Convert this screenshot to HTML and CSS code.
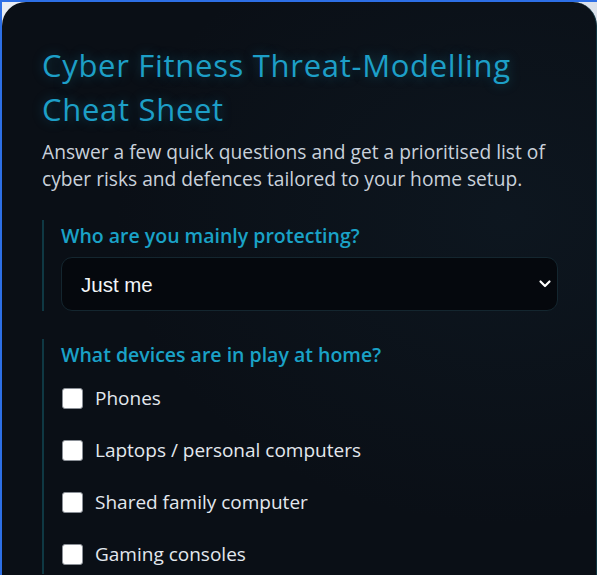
FILE: index.html
```html
<!DOCTYPE html>
<html lang="en">
<head>
<meta charset="utf-8">
<title>Cyber Fitness Threat-Modelling Cheat Sheet</title>
<link rel="stylesheet" href="styles.css">
</head>
<body>
<div class="frame">
  <main class="card">
    <h1 class="title">Cyber Fitness Threat-Modelling Cheat Sheet</h1>
    <p class="intro">Answer a few quick questions and get a prioritised list of cyber risks and defences tailored to your home setup.</p>

    <fieldset class="group">
      <legend class="group-label">Who are you mainly protecting?</legend>
      <div class="select-wrap">
        <select class="select">
          <option>Just me</option>
          <option>Me and my partner</option>
          <option>My family with kids</option>
        </select>
        <svg class="chevron" width="14" height="10" viewBox="0 0 14 10"><path d="M2.5 2.5 L7 7 L11.5 2.5" fill="none" stroke="#ffffff" stroke-width="2.2" stroke-linecap="round" stroke-linejoin="round"/></svg>
      </div>
    </fieldset>

    <fieldset class="group">
      <legend class="group-label">What devices are in play at home?</legend>
      <div class="checks">
        <label class="check"><input type="checkbox" class="box"><span>Phones</span></label>
        <label class="check"><input type="checkbox" class="box"><span>Laptops / personal computers</span></label>
        <label class="check"><input type="checkbox" class="box"><span>Shared family computer</span></label>
        <label class="check"><input type="checkbox" class="box"><span>Gaming consoles</span></label>
      </div>
    </fieldset>
  </main>
</div>
</body>
</html>
```
FILE: styles.css
```css
html, body {
  margin: 0;
  padding: 0;
  height: 100%;
  overflow: hidden;
}
body {
  background: #dfe5ee;
  font-family: "Open Sans", "Noto Sans", sans-serif;
}
.frame {
  height: 100%;
  box-sizing: border-box;
  border-top: 2px solid #2d6fe6;
  border-left: 2px solid #2d6fe6;
  background: linear-gradient(135deg, #e9edf4, #cdd6e3);
}
.card {
  box-sizing: border-box;
  min-height: 100%;
  background:
    radial-gradient(ellipse at 85% 35%, rgba(30, 60, 80, 0.16), transparent 55%),
    #0a0f16;
  border-radius: 24px 24px 0 0;
  border-right: 1px solid #0f3440;
  padding: 41px 38px 40px 40px;
}
.title {
  margin: 0;
  font-size: 31px;
  font-weight: 400;
  letter-spacing: 0.7px;
  line-height: 44px;
  color: #1d9fc7;
  text-shadow: 0 0 12px rgba(29, 159, 199, 0.35);
}
.intro {
  margin: 7px 0 0;
  font-size: 19.2px;
  line-height: 27px;
  color: #c9d1db;
}
.group {
  margin: 28px 0 0;
  padding: 0 0 0 17px;
  border: 0;
  border-left: 2px solid #0f3843;
  min-width: 0;
}
.group-label {
  float: left;
  width: 100%;
  padding: 4px 0 0;
  margin: 0 0 9px;
  font-size: 19.5px;
  font-weight: 600;
  line-height: 24px;
  color: #1aa2c7;
}
.select-wrap {
  clear: both;
  position: relative;
}
.select {
  display: block;
  width: 100%;
  height: 54px;
  box-sizing: border-box;
  appearance: none;
  -webkit-appearance: none;
  background: #05080d;
  border: 1px solid #14262f;
  border-radius: 11px;
  padding: 0 40px 0 19px;
  font-family: "Liberation Sans", Arial, sans-serif;
  font-size: 20.5px;
  color: #f2f5f8;
}
.chevron {
  position: absolute;
  right: 6px;
  top: 22px;
}
.checks {
  clear: both;
  display: flex;
  flex-direction: column;
  gap: 12px;
  padding-top: 2px;
}
.check {
  display: flex;
  align-items: center;
  gap: 12px;
  height: 40px;
  font-size: 19px;
  color: #e3e8ee;
}
.box {
  appearance: none;
  -webkit-appearance: none;
  margin: 0 0 0 1px;
  width: 21px;
  height: 21px;
  box-sizing: border-box;
  background: #ffffff;
  border: 1px solid #8a8f96;
  border-radius: 3px;
  flex: none;
}
```
